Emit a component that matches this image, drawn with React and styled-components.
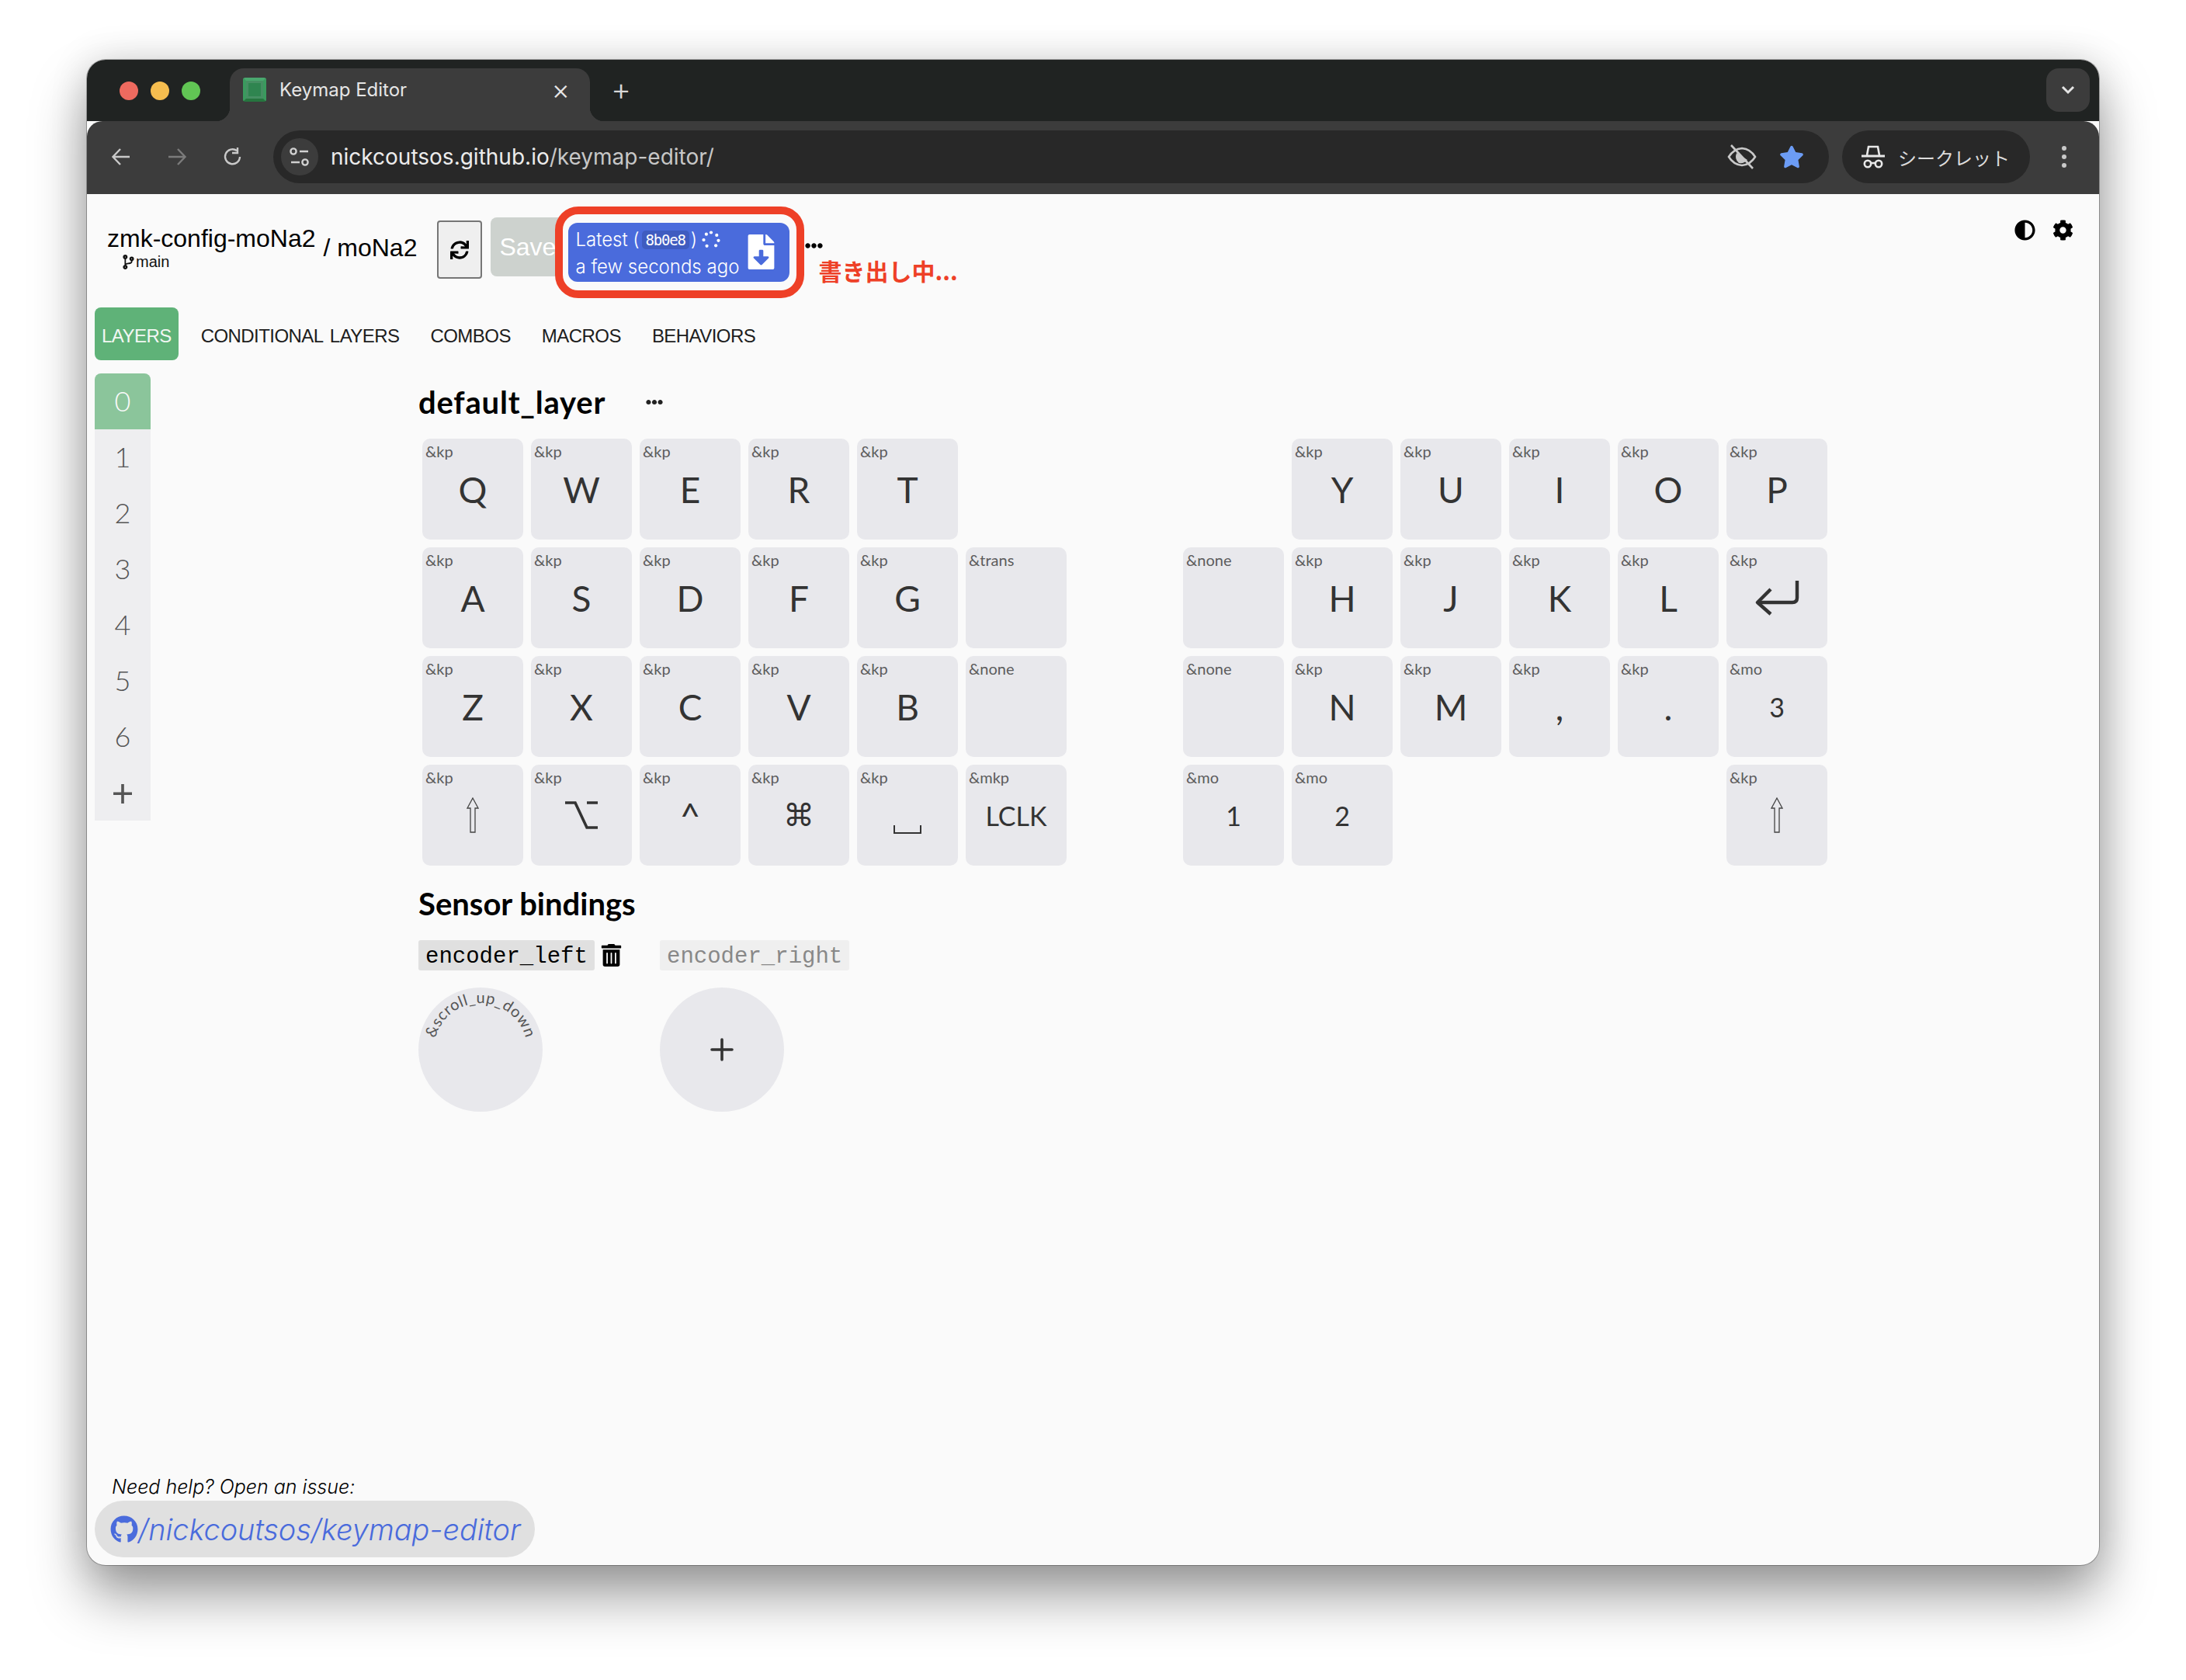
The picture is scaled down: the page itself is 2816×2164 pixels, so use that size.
import React from 'react'
import styled, {createGlobalStyle} from 'styled-components'
import {FaAdjust, FaCog, FaSync, FaTrashAlt, FaGithub, FaFileDownload, FaCodeBranch, FaEllipsisH, FaStar} from 'react-icons/fa'

const Global = createGlobalStyle`
  html, body { margin:0; padding:0; background:#fff; }
  body { font-family:"Liberation Sans", Arial, sans-serif; }
  * { box-sizing:border-box; }
`
const Page = styled.div`
  width:2816px;
  height:2164px;
  padding:77px 112px 0;
  overflow:hidden;
`
const Window = styled.div`
  height:1939px;
  display:flex;
  flex-direction:column;
  border-radius:24px;
  overflow:hidden;
  background:#fafafa;
  box-shadow:0 0 0 1px rgba(0,0,0,.28), 0 40px 70px rgba(0,0,0,.38), 0 0 50px rgba(0,0,0,.14);
`
const TabStrip = styled.div`
  height:79px;
  flex:none;
  background:#202322;
  display:flex;
  align-items:flex-end;
  padding-left:42px;
  padding-right:12px;
`
const Lights = styled.div`
  display:flex;
  gap:16px;
  align-self:flex-start;
  margin-top:28px;
`
const Light = styled.span`
  width:24px;
  height:24px;
  border-radius:50%;
  background:${p => p.$c};
`
const Tab = styled.div`
  position:relative;
  width:464px;
  height:68px;
  margin-left:38px;
  padding:0 20px 14px 17px;
  display:flex;
  align-items:center;
  gap:17px;
  background:#3c3c3c;
  border-radius:18px 18px 0 0;
  color:#e6e6e6;
  font:400 24px Inter, sans-serif;
  &::before, &::after {
    content:"";
    position:absolute;
    bottom:0;
    width:18px;
    height:18px;
  }
  &::before { left:-18px; background:radial-gradient(circle at 0 0, transparent 18px, #3c3c3c 18.5px); }
  &::after { right:-18px; background:radial-gradient(circle at 100% 0, transparent 18px, #3c3c3c 18.5px); }
`
const Favicon = styled.span`
  width:30px;
  height:31px;
  flex:none;
  border-radius:3px;
  background:#2f8550;
  border:4px solid #3a9a5e;
  border-top-color:#4aa86f;
  border-bottom-color:#26753f;
  box-shadow:inset 0 0 0 3px #468f63;
`
const TabTitle = styled.span`
  flex:1;
`
const TabClose = styled.span`
  margin-right:6px;
  font-size:36px;
  font-weight:300;
  line-height:34px;
`
const NewTab = styled.span`
  width:40px;
  margin-left:20px;
  align-self:center;
  margin-top:-3px;
  text-align:center;
  color:#d8d8d8;
  font:300 40px/1 Inter, sans-serif;
`
const TabMenu = styled.div`
  width:56px;
  height:56px;
  margin-left:auto;
  align-self:flex-start;
  margin-top:11px;
  border-radius:16px;
  background:#3c3c3c;
  display:flex;
  align-items:center;
  justify-content:center;
`
const Toolbar = styled.div`
  height:94px;
  flex:none;
  background:#3c3c3c;
  border-radius:20px 20px 0 0;
  display:flex;
  align-items:center;
  padding:0 40px 2px 8px;
`
const NavButton = styled.div`
  width:72px;
  height:68px;
  display:flex;
  align-items:center;
  justify-content:center;
  opacity:${p => p.$dim ? .45 : 1};
`
const Omnibox = styled.div`
  flex:1;
  height:68px;
  margin-left:16px;
  border-radius:34px;
  background:#282828;
  display:flex;
  align-items:center;
  padding:0 32px 0 10px;
`
const SiteBadge = styled.div`
  width:48px;
  height:48px;
  border-radius:50%;
  background:#3c3c3c;
  display:flex;
  align-items:center;
  justify-content:center;
`
const Url = styled.div`
  flex:1;
  margin-left:16px;
  color:#c7c7c7;
  font:400 28px Inter, sans-serif;
  & b { font-weight:400; color:#ececec; }
`
const IncognitoPill = styled.div`
  width:242px;
  height:68px;
  margin-left:17px;
  border-radius:34px;
  background:#282828;
  display:flex;
  align-items:center;
  gap:17px;
  padding-left:25px;
  color:#dcdcdc;
  font:400 24px "Noto Sans CJK JP", sans-serif;
`
const Kebab = styled.div`
  width:8px;
  height:28px;
  margin-left:41px;
  display:flex;
  flex-direction:column;
  justify-content:space-between;
  & i { width:6px; height:6px; border-radius:50%; background:#c9c9c9; }
`
const Content = styled.div`
  flex:1;
  min-height:0;
  display:flex;
  flex-direction:column;
  padding:0 0 10px 10px;
`
const Header = styled.header`
  height:146px;
  flex:none;
  display:flex;
  align-items:flex-start;
  padding:30px 0 0 16px;
`
const Repo = styled.div`
  margin-top:9px;
  color:#000;
`
const RepoName = styled.div`
  font-size:32px;
  line-height:36px;
`
const Branch = styled.div`
  display:flex;
  align-items:center;
  margin-left:18px;
  font-size:20px;
  line-height:24px;
  color:#111;
`
const KeyboardName = styled.div`
  margin:21px 0 0 10px;
  font-size:32px;
  line-height:36px;
  color:#000;
`
const RefreshButton = styled.div`
  width:58px;
  height:75px;
  margin:4px 0 0 26px;
  background:#efefef;
  border:2px solid #767676;
  border-radius:4px;
  display:flex;
  align-items:center;
  justify-content:center;
`
const SaveButton = styled.div`
  width:100px;
  height:76px;
  margin-left:11px;
  padding-left:11px;
  background:#cdd2ce;
  border-radius:8px 0 0 8px;
  color:#fff;
  font-size:32px;
  line-height:76px;
  overflow:hidden;
`
const BuildWrap = styled.div`
  position:relative;
  margin-top:7px;
  width:285px;
  height:76px;
  &::before {
    content:"";
    position:absolute;
    inset:-21px -19px -21px -17px;
    border:10px solid #ee4027;
    border-radius:30px;
    background:#fafafa;
  }
`
const BuildButton = styled.div`
  position:relative;
  width:100%;
  height:100%;
  padding:4px 0 0 9px;
  border-radius:12px;
  background:#4a6bdc;
  color:#fff;
  font:300 24px/35px Inter, sans-serif;
`
const BuildLine = styled.div`
  display:flex;
  align-items:center;
  white-space:nowrap;
`
const Sha = styled.code`
  width:61px;
  height:24px;
  margin:0 2px 0 3px;
  border-radius:5px;
  background:#3f5cc0;
  text-align:center;
  font:400 19px/25px "DejaVu Sans Mono", monospace;
  letter-spacing:-1.2px;
`
const FileIcon = styled.div`
  position:absolute;
  left:226px;
  top:15px;
  line-height:0;
`
const More = styled.div`
  margin:25px 0 0 20px;
  width:23px;
  line-height:0;
`
const Note = styled.div`
  position:relative;
  margin:48px 0 0 -6px;
  color:#ee4027;
  font:700 30px/40px "Noto Sans CJK JP", sans-serif;
  white-space:nowrap;
`
const HeaderIcons = styled.div`
  margin-left:auto;
  display:flex;
  align-items:center;
  gap:22px;
  padding:3px 33px 0 0;
`
const TabBar = styled.nav`
  display:flex;
  align-items:center;
  flex:none;
  height:68px;
`
const TabLink = styled.div`
  height:68px;
  padding:6px 9px 0;
  margin-right:${p => p.$active ? 20 : 22}px;
  display:flex;
  align-items:center;
  border-radius:8px;
  background:${p => p.$active ? '#5fb278' : 'transparent'};
  color:${p => p.$active ? '#f2f7f3' : '#1d1d1d'};
  font-size:24px;
  word-spacing:3px;
  letter-spacing:-.55px;
`
const Body = styled.div`
  display:flex;
  margin-top:17px;
`
const LayerList = styled.ul`
  width:72px;
  margin:0;
  padding:0;
  list-style:none;
  border-radius:8px;
  overflow:hidden;
  flex:none;
`
const LayerItem = styled.li`
  height:72px;
  padding-bottom:2px;
  display:flex;
  align-items:center;
  justify-content:center;
  background:${p => p.$active ? '#8bc59b' : '#eeeef0'};
  color:${p => p.$active ? '#fafafa' : '#555'};
  font:${p => p.$wide ? '400 50px' : '300 36px'} Lato, sans-serif;
`
const Main = styled.main`
  margin-left:345px;
  display:flex;
  flex-direction:column;
`
const LayerHead = styled.div`
  height:84px;
  padding-bottom:10px;
  display:flex;
  align-items:center;
  gap:52px;
`
const Title = styled.h2`
  margin:0;
  font:700 40px/48px Lato, sans-serif;
  color:#000;
`
const LayerTitle = styled(Title)`
  letter-spacing:.8px;
`
const KeyGrid = styled.div`
  display:grid;
  grid-template-columns:repeat(13, 130px);
  grid-auto-rows:130px;
  gap:10px;
  margin-left:5px;
`
const KeyCap = styled.div`
  position:relative;
  grid-column:${p => p.$col + 1};
  grid-row:${p => p.$row + 1};
  display:flex;
  align-items:center;
  justify-content:center;
  border-radius:10px;
  background:#e8e8ec;
  color:#333;
  font-family:${p => p.$symbol ? '"DejaVu Sans"' : 'Lato'}, sans-serif;
  font-size:${p => p.$small ? 34 : p.$symbol ? 40 : 46}px;
`
const Behavior = styled.span`
  position:absolute;
  top:3px;
  left:4px;
  font:400 20px/26px Lato, sans-serif;
  color:#5c5c5c;
`
const SensorTitle = styled(Title)`
  margin-top:25px;
`
const EncoderGrid = styled.div`
  display:flex;
  margin-top:23px;
`
const Encoder = styled.div`
  width:311px;
`
const EncoderTab = styled.div`
  display:flex;
  align-items:center;
  height:39px;
`
const EncoderName = styled.code`
  height:39px;
  padding:0 9px;
  background:${p => p.$active ? '#e0e0e0' : '#efefef'};
  color:${p => p.$active ? '#000' : '#888'};
  border-radius:3px;
  font:400 29px/43px "Liberation Mono", monospace;
`
const TrashButton = styled.span`
  margin-left:7px;
  line-height:0;
`
const Knob = styled.div`
  width:160px;
  height:160px;
  margin-top:22px;
  border-radius:50%;
  background:#e8e8ec;
  display:flex;
  align-items:center;
  justify-content:center;
`
const KnobText = styled.text`
  font:400 20px Lato, sans-serif;
  fill:#555;
  letter-spacing:.6px;
`
const Footer = styled.footer`
  margin-top:auto;
`
const HelpText = styled.div`
  margin-left:22px;
  font:300 25px/34px Inter, sans-serif;
  font-style:italic;
  color:#000;
`
const RepoLink = styled.a`
  display:inline-flex;
  align-items:center;
  width:567px;
  height:73px;
  margin-top:1px;
  padding:0 0 0 20px;
  border-radius:37px;
  background:#e0e0e0;
  color:#4a6bdc;
  font:300 37.8px Inter, sans-serif;
  font-style:italic;
  white-space:nowrap;
`

const UpArrow = () => (
  <svg width="16" height="46" viewBox="0 0 16 46" fill="none" stroke="#444" strokeWidth="1.3">
    <path d="M8 1 L15 14 H11 V45 H5 V14 H1 Z"/>
  </svg>
)
const EnterArrow = () => (
  <svg width="58" height="48" viewBox="0 0 58 48" fill="none" stroke="#333" strokeWidth="4.4" strokeLinejoin="round">
    <path d="M55 2 V24 Q55 30 49 30 H5"/>
    <path d="M21 13 L4 30 L21 45"/>
  </svg>
)
const OptionKey = () => (
  <svg width="44" height="36" viewBox="0 0 44 36" fill="none" stroke="#333" strokeWidth="3.6">
    <path d="M1 2 H14 L29 34 H43 M29 2 H43"/>
  </svg>
)
const SpaceKey = () => (
  <svg width="36" height="11" viewBox="0 0 36 11" fill="none" stroke="#333" strokeWidth="2" style={{marginTop: 36}}>
    <path d="M1 0 V10 H35 V0"/>
  </svg>
)
const PlusMark = () => (
  <svg width="30" height="30" viewBox="0 0 30 30" fill="none" stroke="#333" strokeWidth="3.6" strokeLinecap="round">
    <path d="M15 2 V28 M2 15 H28"/>
  </svg>
)
const NavIcon = ({d, color = '#c9c9c9'}) => (
  <svg width="26" height="26" viewBox="0 0 26 26" fill="none" stroke={color} strokeWidth="2.4">
    <path d={d}/>
  </svg>
)
const Sliders = () => (
  <svg width="28" height="26" viewBox="0 0 28 26" fill="none" stroke="#d0d0d0" strokeWidth="2.4">
    <circle cx="6" cy="6" r="3.6"/><path d="M14 6 H25"/>
    <circle cx="21" cy="20" r="3.6"/><path d="M3 20 H14"/>
  </svg>
)
const EyeOff = () => (
  <svg width="38" height="32" viewBox="0 0 38 32" fill="none" stroke="#c8c8c8" strokeWidth="2.6">
    <path d="M2 16 Q8 6 19 5 Q30 6 36 16 Q30 26 19 27 Q8 26 2 16 Z"/>
    <path d="M12 11 Q9 19 15 24 Q22 25 26 20 Z" fill="#c8c8c8" stroke="none"/>
    <path d="M5 1 L33 31"/>
  </svg>
)
const Incognito = () => (
  <svg width="30" height="30" viewBox="0 0 30 30" fill="none" stroke="#e8e8e8" strokeWidth="2.6">
    <path d="M7 13 L9 2 H21 L23 13"/>
    <path d="M0 14 H30" strokeWidth="3"/>
    <circle cx="8" cy="24" r="4.2"/><circle cx="22" cy="24" r="4.2"/>
    <path d="M12 23 H18"/>
  </svg>
)
const Spinner = () => (
  <svg width="24" height="24" viewBox="0 0 24 24" fill="#fff" style={{marginLeft: 6}}>
    {[0, 50, 95, 140, 215, 270, 320].map(a => (
      <circle key={a} r="2.1" cx={12 + 9.5 * Math.sin(a * Math.PI / 180)} cy={12 - 9.5 * Math.cos(a * Math.PI / 180)}/>
    ))}
  </svg>
)
const Chevron = () => (
  <svg width="18" height="12" viewBox="0 0 18 12" fill="none" stroke="#e4e4e4" strokeWidth="3"><path d="M2 2 L9 9 L16 2"/></svg>
)

const keys = [
  ['&kp', 'Q', 0, 0], ['&kp', 'W', 0, 1], ['&kp', 'E', 0, 2], ['&kp', 'R', 0, 3], ['&kp', 'T', 0, 4],
  ['&kp', 'Y', 0, 8], ['&kp', 'U', 0, 9], ['&kp', 'I', 0, 10], ['&kp', 'O', 0, 11], ['&kp', 'P', 0, 12],
  ['&kp', 'A', 1, 0], ['&kp', 'S', 1, 1], ['&kp', 'D', 1, 2], ['&kp', 'F', 1, 3], ['&kp', 'G', 1, 4], ['&trans', '', 1, 5],
  ['&none', '', 1, 7], ['&kp', 'H', 1, 8], ['&kp', 'J', 1, 9], ['&kp', 'K', 1, 10], ['&kp', 'L', 1, 11], ['&kp', <EnterArrow/>, 1, 12],
  ['&kp', 'Z', 2, 0], ['&kp', 'X', 2, 1], ['&kp', 'C', 2, 2], ['&kp', 'V', 2, 3], ['&kp', 'B', 2, 4], ['&none', '', 2, 5],
  ['&none', '', 2, 7], ['&kp', 'N', 2, 8], ['&kp', 'M', 2, 9], ['&kp', ',', 2, 10], ['&kp', '.', 2, 11], ['&mo', '3', 2, 12, 'small'],
  ['&kp', <UpArrow/>, 3, 0], ['&kp', <OptionKey/>, 3, 1], ['&kp', '^', 3, 2], ['&kp', '⌘', 3, 3, 'symbol'], ['&kp', <SpaceKey/>, 3, 4], ['&mkp', 'LCLK', 3, 5, 'small'],
  ['&mo', '1', 3, 7, 'small'], ['&mo', '2', 3, 8, 'small'], ['&kp', <UpArrow/>, 3, 12],
]
const layers = ['0', '1', '2', '3', '4', '5', '6', '+']

const App = () => (
  <Page>
    <Global/>
    <Window>
      <TabStrip>
        <Lights>
          <Light $c="#ee6a5f"/><Light $c="#f5bd4f"/><Light $c="#61c554"/>
        </Lights>
        <Tab>
          <Favicon/>
          <TabTitle>Keymap Editor</TabTitle>
          <TabClose>×</TabClose>
        </Tab>
        <NewTab>+</NewTab>
        <TabMenu><Chevron/></TabMenu>
      </TabStrip>
      <Toolbar>
        <NavButton><NavIcon d="M24 13 H3 M12 3 L2.5 13 L12 23"/></NavButton>
        <NavButton $dim><NavIcon d="M2 13 H23 M14 3 L23.5 13 L14 23"/></NavButton>
        <NavButton><NavIcon d="M22 13 A9.5 9.5 0 1 1 18 5 M19 1 V8 H12"/></NavButton>
        <Omnibox>
          <SiteBadge><Sliders/></SiteBadge>
          <Url><b>nickcoutsos.github.io</b>/keymap-editor/</Url>
          <EyeOff/>
          <FaStar size={32} color="#6c9cf5" style={{marginLeft: 29}}/>
        </Omnibox>
        <IncognitoPill><Incognito/>シークレット</IncognitoPill>
        <Kebab><i/><i/><i/></Kebab>
      </Toolbar>
      <Content>
        <Header>
          <Repo>
            <RepoName>zmk-config-moNa2</RepoName>
            <Branch><FaCodeBranch size={19}/>main</Branch>
          </Repo>
          <KeyboardName>/ moNa2</KeyboardName>
          <RefreshButton><FaSync size={24} color="#000"/></RefreshButton>
          <SaveButton>Save</SaveButton>
          <BuildWrap>
            <BuildButton>
              <BuildLine>Latest (<Sha>8b0e8</Sha>)<Spinner/></BuildLine>
              <BuildLine>a few seconds ago</BuildLine>
              <FileIcon><FaFileDownload size={45} color="#fff"/></FileIcon>
            </BuildButton>
          </BuildWrap>
          <More><FaEllipsisH size={23} color="#000"/></More>
          <Note>書き出し中...</Note>
          <HeaderIcons>
            <FaAdjust size={27} color="#000"/>
            <FaCog size={27} color="#000"/>
          </HeaderIcons>
        </Header>
        <TabBar>
          <TabLink $active>LAYERS</TabLink>
          <TabLink>CONDITIONAL LAYERS</TabLink>
          <TabLink>COMBOS</TabLink>
          <TabLink>MACROS</TabLink>
          <TabLink>BEHAVIORS</TabLink>
        </TabBar>
        <Body>
          <LayerList>
            {layers.map((l, i) => <LayerItem key={l} $active={i === 0} $wide={l === '+'}>{l}</LayerItem>)}
          </LayerList>
          <Main>
            <LayerHead>
              <LayerTitle>default_layer</LayerTitle>
              <FaEllipsisH size={22} color="#222"/>
            </LayerHead>
            <KeyGrid>
              {keys.map(([behavior, label, row, col, kind]) => (
                <KeyCap key={row + '-' + col} $row={row} $col={col} $small={kind === 'small'} $symbol={kind === 'symbol'}>
                  <Behavior>{behavior}</Behavior>
                  {label}
                </KeyCap>
              ))}
            </KeyGrid>
            <SensorTitle>Sensor bindings</SensorTitle>
            <EncoderGrid>
              <Encoder>
                <EncoderTab>
                  <EncoderName $active>encoder_left</EncoderName>
                  <TrashButton><FaTrashAlt size={29} color="#000"/></TrashButton>
                </EncoderTab>
                <Knob>
                  <svg width="160" height="160" viewBox="0 0 160 160">
                    <path id="knob-arc" d="M 20.9 90.4 A 60 60 0 1 1 139.1 90.4" fill="none"/>
                    <KnobText><textPath href="#knob-arc" startOffset="50%" textAnchor="middle">&amp;scroll_up_down</textPath></KnobText>
                  </svg>
                </Knob>
              </Encoder>
              <Encoder>
                <EncoderTab>
                  <EncoderName>encoder_right</EncoderName>
                </EncoderTab>
                <Knob><PlusMark/></Knob>
              </Encoder>
            </EncoderGrid>
          </Main>
        </Body>
        <Footer>
          <HelpText>Need help? Open an issue:</HelpText>
          <RepoLink><FaGithub size={36}/>/nickcoutsos/keymap-editor</RepoLink>
        </Footer>
      </Content>
    </Window>
  </Page>
)

export default App
